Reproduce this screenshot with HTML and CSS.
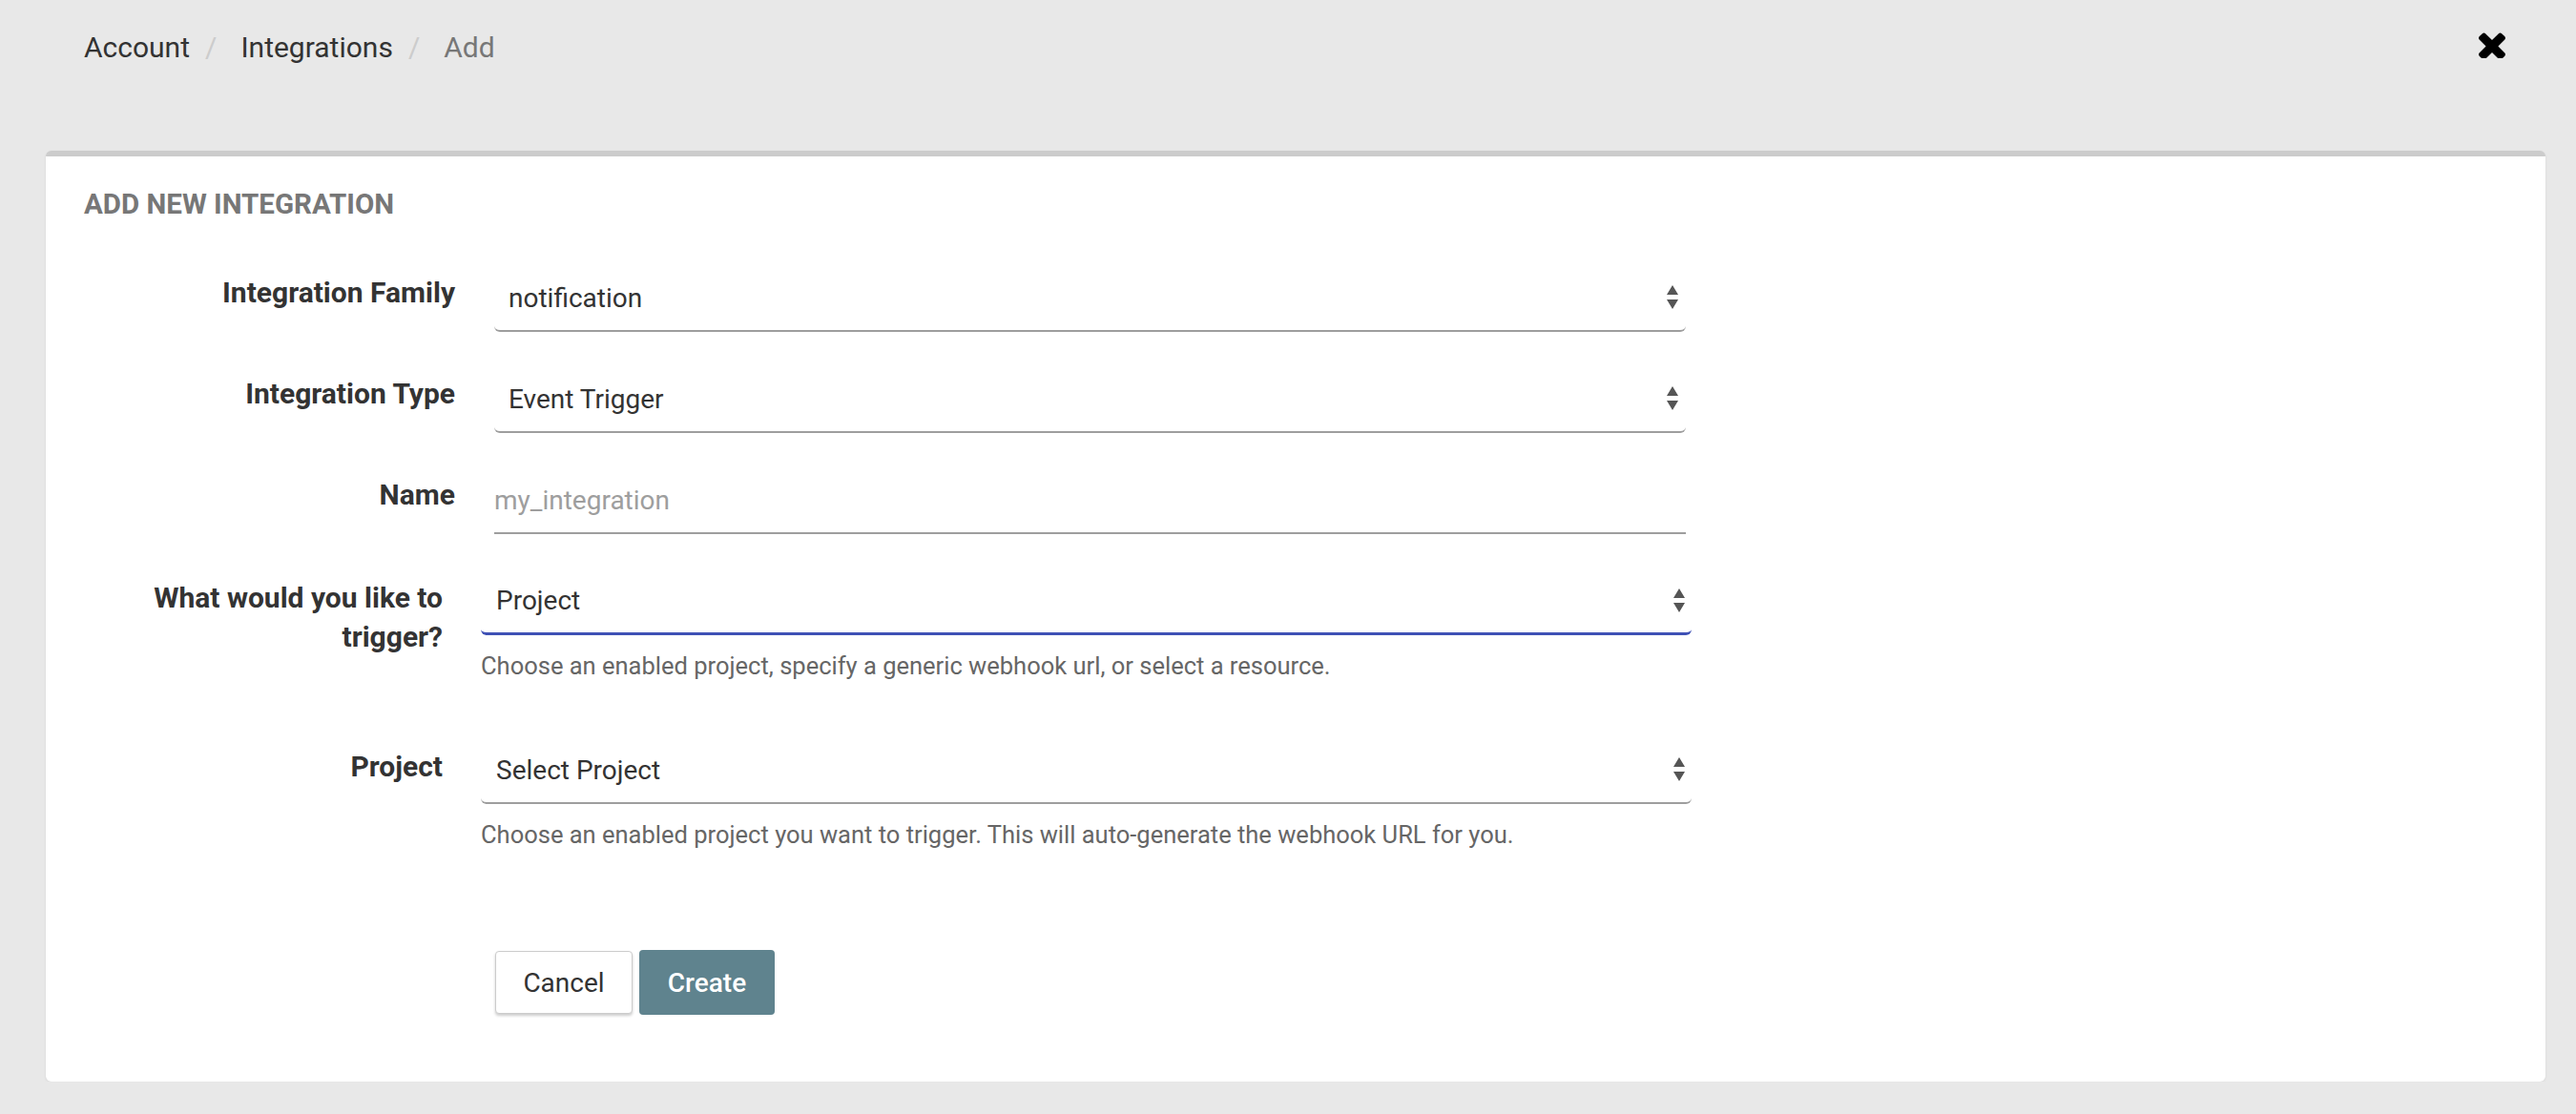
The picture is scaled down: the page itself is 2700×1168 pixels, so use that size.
FILE: index.html
```html
<!DOCTYPE html>
<html lang="en">
<head>
<meta charset="utf-8">
<title>Add Integration</title>
<link rel="stylesheet" href="styles.css">
</head>
<body>
<header class="topbar">
  <nav class="breadcrumb">
    <a class="crumb" href="#">Account</a><span class="sep">/</span><a class="crumb" href="#">Integrations</a><span class="sep">/</span><span class="crumb current">Add</span>
  </nav>
  <a class="close" href="#" aria-label="Close">
    <svg viewBox="110 302 1188 1188" width="28" height="28"><path fill="#000" d="M1298 1322q0 40-28 68l-136 136q-28 28-68 28t-68-28l-294-294-294 294q-28 28-68 28t-68-28l-136-136q-28-28-28-68t28-68l294-294-294-294q-28-28-28-68t28-68l136-136q28-28 68-28t68 28l294 294 294-294q28-28 68-28t68 28l136 136q28 28 28 68t-28 68l-294 294 294 294q28 28 28 68z"/></svg>
  </a>
</header>

<main class="card">
  <h2 class="card-title">ADD NEW INTEGRATION</h2>
  <form class="form">
    <div class="row">
      <label class="label">Integration Family</label>
      <div class="select"><span>notification</span><svg class="arrows" viewBox="0 0 12 26" width="12" height="26"><path d="M0 10L6 0L12 10Z M0 15L12 15L6 25Z" fill="#555"/></svg></div>
    </div>
    <div class="row">
      <label class="label">Integration Type</label>
      <div class="select"><span>Event Trigger</span><svg class="arrows" viewBox="0 0 12 26" width="12" height="26"><path d="M0 10L6 0L12 10Z M0 15L12 15L6 25Z" fill="#555"/></svg></div>
    </div>
    <div class="row">
      <label class="label">Name</label>
      <div class="input"><span class="placeholder">my_integration</span></div>
    </div>

    <div class="row wide trigger">
      <label class="label tall">What would you like to trigger?</label>
      <div class="control">
        <div class="select focused"><span>Project</span><svg class="arrows" viewBox="0 0 12 26" width="12" height="26"><path d="M0 10L6 0L12 10Z M0 15L12 15L6 25Z" fill="#555"/></svg></div>
        <p class="help">Choose an enabled project, specify a generic webhook url, or select a resource.</p>
      </div>
    </div>
    <div class="row wide project">
      <label class="label tall">Project</label>
      <div class="control">
        <div class="select"><span>Select Project</span><svg class="arrows" viewBox="0 0 12 26" width="12" height="26"><path d="M0 10L6 0L12 10Z M0 15L12 15L6 25Z" fill="#555"/></svg></div>
        <p class="help">Choose an enabled project you want to trigger. This will auto-generate the webhook URL for you.</p>
      </div>
    </div>

    <div class="row actions">
      <div></div>
      <div class="buttons">
        <button type="button" class="btn btn-cancel">Cancel</button>
        <button type="button" class="btn btn-create">Create</button>
      </div>
    </div>
  </form>
</main>
</body>
</html>
```

FILE: styles.css
```css
* { box-sizing: border-box; }

html, body {
  margin: 0;
  padding: 0;
  background: #e8e8e8;
  font-family: Roboto, "Liberation Sans", Arial, sans-serif;
  color: #333;
}

.topbar {
  height: 158px;
  display: flex;
  justify-content: space-between;
  align-items: flex-start;
  padding: 30px 74px 0 88px;
}

.breadcrumb {
  font-size: 30px;
  line-height: 40px;
  display: flex;
}

.crumb {
  color: #333;
  text-decoration: none;
}

.crumb.current {
  color: #777;
}

.sep {
  color: #ccc;
  margin: 0 25px 0 16px;
}

.close {
  display: block;
  margin-top: 3px;
  width: 28px;
  height: 28px;
}

.close svg { display: block; }

.card {
  margin: 0 32px 0 48px;
  background: #fff;
  border-top: 6px solid #ccc;
  border-radius: 6px;
  padding: 30px 40px 70px;
  box-shadow: 0 1px 3px rgba(0, 0, 0, 0.08);
}

.card-title {
  margin: 0;
  font-size: 29.5px;
  line-height: 40px;
  font-weight: 700;
  color: #777;
}

.form {
  margin-top: 44px;
}

.row {
  display: grid;
  grid-template-columns: 389px 1249px;
  column-gap: 41px;
  margin-bottom: 36px;
}

.row.wide {
  grid-template-columns: 376px 1269px;
  column-gap: 40px;
}

.row.trigger {
  margin-top: 1px;
  margin-bottom: 60px;
}

.row.project {
  margin-bottom: 106px;
}

.label {
  text-align: right;
  font-size: 30px;
  font-weight: 700;
  line-height: 40px;
  padding-top: 9px;
  color: #333;
}

.label.tall {
  line-height: 41px;
  padding-top: 10px;
}

.select,
.input {
  height: 70px;
  display: flex;
  align-items: center;
  justify-content: space-between;
  border-bottom: 2px solid #9e9e9e;
  border-radius: 6px;
  padding: 0 8px 0 15px;
  font-size: 28px;
  color: #333;
  background: #fff;
}

.row.wide .select {
  padding: 0 7px 0 16px;
}

.select.focused {
  border-bottom: 3px solid #3f51b5;
}

.input {
  padding: 0;
  border-radius: 0;
}

.placeholder {
  color: #9e9e9e;
}

.arrows {
  display: block;
  flex: none;
}

.help {
  margin: 17px 0 0;
  font-size: 25.5px;
  line-height: 30px;
  color: #666;
}

.actions {
  margin-bottom: 0;
}

.buttons {
  display: flex;
  align-items: center;
  gap: 7px;
  padding-left: 1px;
}

.btn {
  font-family: Roboto, "Liberation Sans", Arial, sans-serif;
  font-size: 28px;
  border-radius: 4px;
  cursor: pointer;
}

.btn-cancel {
  width: 144px;
  height: 66px;
  background: #fff;
  color: #333;
  border: 1px solid #ccc;
  box-shadow: 0 2px 3px rgba(0, 0, 0, 0.2);
}

.btn-create {
  width: 142px;
  height: 68px;
  background: #5f838e;
  color: #fff;
  border: none;
  font-weight: 500;
}
```
